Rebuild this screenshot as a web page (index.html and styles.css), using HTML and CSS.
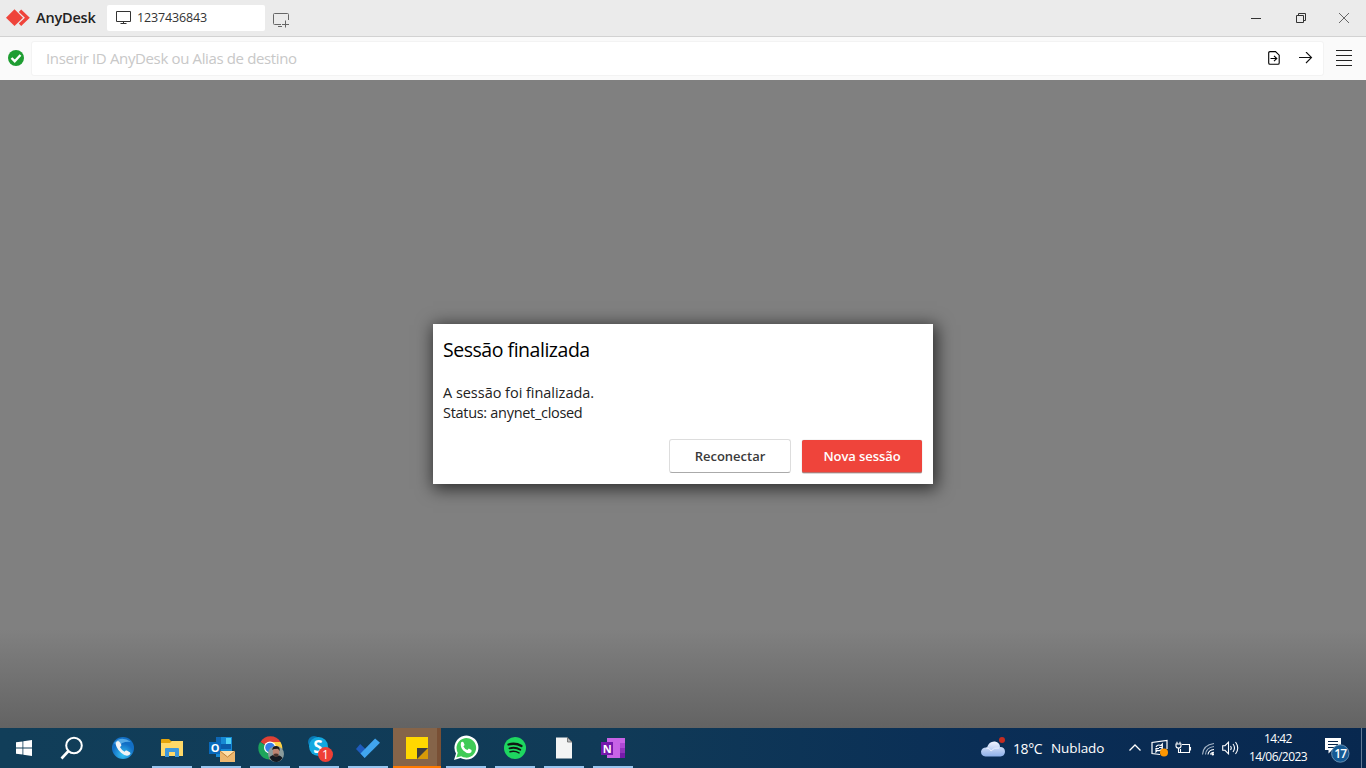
FILE: index.html
```html
<!DOCTYPE html>
<html lang="pt-BR">
<head>
<meta charset="utf-8">
<title>AnyDesk</title>
<link rel="stylesheet" href="styles.css">
</head>
<body>
<header class="titlebar">
  <svg class="logo" width="24" height="18" viewBox="0 0 24 18"><path d="M0 8.700 8.500.3 17 8.700 8.500 17z" fill="#ef443b"/><path d="M12.800 2.900 15.200.5 23.800 8.700 15.200 17l-2.400-2.400L18.900 8.700z" fill="#ef443b"/></svg>
  <span class="brand">AnyDesk</span>
  <div class="tab">
    <svg width="16" height="14" viewBox="0 0 16 14" fill="none" stroke="#333" stroke-width="1"><path d="M.5.5h14v10H.5zM7.500 10.500v2M4.500 12.500h6"/></svg>
    <span class="tab-id">1237436843</span>
  </div>
  <svg class="newtab" width="18" height="16" viewBox="0 0 18 16" fill="none" stroke="#666" stroke-width="1"><path d="M8 11.500H1.500Q.5 11.500.5 10.500V1.500Q.5.5 1.500.5h13q1 0 1 1V7M5 13.500h4M12.500 7.500v7M9 11.500h7"/></svg>
  <div class="controls">
    <svg width="12" height="12"><path d="M1 6.500h10" stroke="#333"/></svg>
    <svg width="12" height="12" fill="none" stroke="#333"><path d="M1.500 3.500h7v7h-7zM3.500 3.500v-2h7v7h-2"/></svg>
    <svg width="12" height="12" fill="none" stroke="#666"><path d="m1 1 10 10M11 1 1 11"/></svg>
  </div>
</header>
<div class="toolbar">
  <svg class="ok" width="16" height="16" viewBox="0 0 16 16"><circle cx="8" cy="8" r="8" fill="#1e9d32"/><path d="m3.500 8 3.200 3.200L12.500 5" fill="none" stroke="#fff" stroke-width="2.400"/></svg>
  <div class="address">
    <span class="placeholder">Inserir ID AnyDesk ou Alias de destino</span>
    <svg class="file" width="12" height="14" fill="none" stroke="#000" stroke-width="1.100"><path d="M2 .6h5.500l3.700 3.600V12q0 1.300-1.200 1.300H2Q.7 13.300.7 12V2Q.7.6 2 .6zM2.500 7.500h6M6 4.800l2.800 2.700L6 10.200"/></svg>
    <svg class="go" width="14" height="12" fill="none" stroke="#111" stroke-width="1.100"><path d="M0 5.500h12.500M7 0l5.500 5.500L7 11"/></svg>
  </div>
  <svg class="menu" width="16" height="16" stroke="#222"><path d="M0 .5h16M0 5.500h16M0 10.500h16M0 15.500h16"/></svg>
</div>
<main class="stage">
  <section class="dialog">
    <h1>Sessão finalizada</h1>
    <p><span class="line-a">A sessão foi finalizada.</span><br><span class="line-b">Status: anynet_closed</span></p>
    <div class="actions"><button class="btn plain">Reconectar</button><button class="btn primary">Nova sessão</button></div>
  </section>
</main>
<footer class="taskbar">
  <div class="cell"><svg width="16" height="16" fill="#fff"><path d="M0 2.300 6.500 1.400v6.200H0zM7.300 1.200 16 0v7.600H7.300zM0 8.400h6.500v6.200L0 13.700zM7.300 8.400H16V16l-8.700-1.200z"/></svg></div>
  <div class="cell"><svg width="24" height="24" fill="none" stroke="#fff"><circle cx="14" cy="9.500" r="7.800" stroke-width="2"/><path d="m8.500 15-7 7.500" stroke-width="2.600"/></svg></div>
  <div class="apps">
    <div class="cell"><svg width="24" height="24"><defs><radialGradient id="ph" cy=".8"><stop stop-color="#38c4f4"/><stop offset="1" stop-color="#126fc5"/></radialGradient></defs><circle cx="12" cy="12" r="11" fill="url(#ph)"/><path d="M3 7Q10-1 20 6q-9-1-13 5z" fill="#8bd8ff" opacity=".55"/><path d="M5 6.500q2-3 4 0l1.400 2.600q0 1.300-1.500 2 1.600 3 4.600 4.600 1-1.600 2.300-1.200l3 1.800q1.500 1.200-.6 2.800-3.200 2-8.200-2.300Q4 11.200 5 6.500z" fill="#f3f3f5"/></svg></div>
    <div class="cell open"><svg width="22" height="20"><path d="M0 1.500Q0 1 1 1h7l2 2h12v15H0z" fill="#e5a50b"/><path d="M0 5h9l2-2h11v15H0z" fill="#ffd968"/><path d="M4 19V11q0-1 1-1h12q1 0 1 1v8h-4v-5H8v5z" fill="#3d98dc"/></svg></div>
    <div class="cell open"><svg class="nudge" width="28" height="28"><path d="M8 3h16v20H8z" fill="#1689d4"/><path d="M8 3h5v6H8z" fill="#0e67b5"/><path d="M18 4h5v6h-5z" fill="#50d2f5"/><path d="M13 10h10v5H13z" fill="#0a5cab"/><path d="M1 8h12v12H1z" fill="#0869bc"/><text x="2.700" y="18" class="app-letter">O</text><path d="M12 17h15v11H12z" fill="#edb76f"/><path d="m12 17 7.500 6 7.500-6z" fill="#ffe0ab"/><path d="m12 17 7.500 6 7.500-6" fill="none" stroke="#c28338"/></svg></div>
    <div class="cell open"><svg class="nudge" width="28" height="28"><path d="M13 14 3.500 8A11.500 11.500 0 0 1 23.500 8z" fill="#df4034"/><path d="M13 14 3 8a11.500 11.500 0 0 0 9 17.500z" fill="#1da45b"/><path d="M13 8h10.500a11.500 11.500 0 0 1-11 17.500z" fill="#fdd045"/><circle cx="13" cy="13.500" r="6" fill="#fff"/><circle cx="13" cy="13.500" r="4.800" fill="#377ee7"/><circle cx="19" cy="20" r="8" fill="#8a9b9c"/><path d="M12.500 23q4-3 7-2 4 0 6 3-3 4-6 4-5 0-7-5z" fill="#151a22"/><ellipse cx="19" cy="18" rx="3.300" ry="4.500" fill="#bd8472"/><path d="M15.300 16q0-4 4-4 4 .5 3.300 5l-1.600-2.300-4 .3z" fill="#1b1817"/><path d="M16.500 20q2.500-1 5 0-.5 3-2.500 3-2-.5-2.500-3" fill="#48322d"/></svg></div>
    <div class="cell open"><svg class="nudge" width="28" height="28"><circle cx="8" cy="8" r="6" fill="#0a79b5"/><circle cx="17" cy="17" r="6.500" fill="#0c83bd"/><circle cx="12.500" cy="12.500" r="9.500" fill="#13a8e0"/><text x="7.200" y="19" class="skype-letter">S</text><circle cx="19.500" cy="20.500" r="7.500" fill="#ef3f35"/><text x="16" y="25" class="count">1</text></svg></div>
    <div class="cell open"><svg width="26" height="22"><path d="m1 12 4.200-5L13 14.500 9.700 21z" fill="#1e5bbd"/><path d="m5.500 16.500 14.600-15L25 5.800 9.700 21z" fill="#41a5ee"/></svg></div>
    <div class="cell open active"><svg width="22" height="22"><path d="M0 0h22v11L11 22H0z" fill="#ffd800"/><path d="M11 22 22 11v11z" fill="#d69a08"/><path d="M11 11h11L11 22z" fill="#3e3e3e"/></svg></div>
    <div class="cell open"><svg width="26" height="26"><path d="M1 25 3 18.500A12 12 0 1 1 7.500 23z" fill="#fff"/><path d="m3.300 22.500 1.500-4.800a9.800 9.800 0 1 1 3.400 3.500z" fill="#3fcb56"/><path d="M8 7.500q1.700-1.700 2.700.2l.9 2.200-1.200 1.500q1.300 2.500 4 3.600l1.400-1.400 2.700 1.400q.6 2.700-2.200 3.300-2.700.3-6-2.800Q7 12.200 8 7.500z" fill="#fff"/></svg></div>
    <div class="cell open"><svg width="24" height="24" fill="none" stroke="#101713" stroke-linecap="round"><circle cx="12" cy="12" r="11" fill="#1ed760" stroke="none"/><path d="M5.500 8.500q7-2 13 1.500" stroke-width="2.300"/><path d="M6.500 12.300q6-1.600 10.800 1.400" stroke-width="1.900"/><path d="M7 15.700q5-1.200 9 1.200" stroke-width="1.500"/></svg></div>
    <div class="cell open"><svg width="16" height="22"><path d="M0 .5h11.500L16 5v16.500H0z" fill="#f3f4f4"/><path d="M11.500.5V5H16z" fill="#b5b9bc" stroke="#666" stroke-width=".8"/></svg></div>
    <div class="cell open"><svg width="24" height="22"><path d="M6 1h18v20H6z" fill="#c863e6"/><path d="M19 6h5v5h-5z" fill="#ad48d5"/><path d="M19 11h5v5h-5z" fill="#9033bd"/><path d="M19 16h5v5h-5z" fill="#741bab"/><path d="M0 5h12v13H0z" fill="#7518ad"/><text x="1.800" y="15.500" class="app-letter">N</text></svg></div>
  </div>
  <div class="tray">
    <svg class="weather" width="26" height="24"><defs><linearGradient id="cl" x2="0" y2="1"><stop stop-color="#f3f5ff"/><stop offset="1" stop-color="#8cafe9"/></linearGradient></defs><path d="M5.500 21.500Q1 21 1 16.500 2 12 7 12.500 9 6 15 6.500q5 1 5 5.500 5 0 5 5-.5 4-4.500 4.500z" fill="url(#cl)"/><path d="M6 13q4 0 5 3 3-4 8-3" fill="none" stroke="#e9efff"/><circle cx="22" cy="5" r="3" fill="#c42c21"/></svg>
    <span class="temp">18°C</span><span class="sky">Nublado</span>
    <svg class="chev" width="12" height="8" fill="none" stroke="#fff" stroke-width="1.300"><path d="m.5 6.500 5.500-5.500 5.500 5.500"/></svg>
    <svg class="update" width="18" height="18" fill="none" stroke="#fff" stroke-width="1.200"><path d="M9 15.500 1 14.500V3.500L16 1.500V10"/><path d="M5 8q1.500-3 5-1.500L11.300 5v3.500H8M11.500 9q-1 3.500-5.200 2.300L5 12.800V9.500h3"/><circle cx="13" cy="13.500" r="4" fill="#ff9700" stroke="none"/></svg>
    <svg class="battery" width="17" height="14" fill="none" stroke="#fff" stroke-width="1.100"><path d="M7 3.500h7.500v8h-9V8M15.500 6v3.500M1 3h5v2q0 2-2.500 2T1 5zM2 3V.8M5 3V.8M3.500 7v4.500h2"/></svg>
    <svg class="wifi" width="14" height="14" fill="none" stroke="#a4b4c6" stroke-width="1.100"><path d="M1.500 12.500Q2 3 13 1.500M4.500 12.500Q5 5.500 13 4.500"/><path d="M7 12.500q.5-4.500 6-5M9.500 12.500q.5-2 3.500-2.200" stroke="#fff"/><circle cx="11.800" cy="12.200" r="1.200" fill="#fff" stroke="none"/></svg>
    <svg class="sound" width="18" height="14" fill="none" stroke="#fff" stroke-width="1.100"><path d="M.7 4.700H3l3.500-3.500v11.600L3 9.300H.7zM8.500 5q1.500 2 0 4M11 3q3 4 0 8M13.500 1q4.500 6 0 12"/></svg>
    <div class="clock"><span class="time">14:42</span><span class="date">14/06/2023</span></div>
    <svg class="notice" width="28" height="28"><path d="M1 3h16v12H8l-3.500 3.500V15H1z" fill="#fff"/><path d="M4 6.500h10M4 9.500h10M4 12.500h6" stroke="#08264b"/><circle cx="16.300" cy="18.500" r="8.700" fill="#155a94" stroke="#668daf"/><text x="10.200" y="22.500" class="seventeen">17</text></svg>
  </div>
</footer>
</body>
</html>
```

FILE: styles.css
```css
* { box-sizing: border-box; }
body {
  margin: 0;
  width: 1366px;
  height: 768px;
  overflow: hidden;
  display: flex;
  flex-direction: column;
  font-family: "Open Sans", "Noto Sans", sans-serif;
}
svg { display: block; flex: none; }
span { white-space: nowrap; }
.titlebar {
  height: 37px;
  flex: none;
  display: flex;
  align-items: flex-start;
  background: #ebebeb;
  border-bottom: 1px solid #d2d2d2;
}
.logo { margin: 9px 0 0 6px; }
.brand {
  width: 77px;
  flex: none;
  padding: 8px 0 0 6px;
  font-size: 14.500px;
  line-height: 20px;
  font-weight: 600;
  color: #222;
  letter-spacing: -.2px;
}
.tab {
  width: 158px;
  height: 26px;
  margin-top: 5px;
  padding-left: 9px;
  border-radius: 2px;
  background: #fff;
  display: flex;
  align-items: center;
  gap: 5px;
}
.tab-id { font-size: 12.500px; letter-spacing: -.14px; color: #333; padding-bottom: 1px; }
.newtab { margin: 13px 0 0 8px; }
.controls { display: flex; gap: 32px; margin: 12px 16px 0 auto; }
.controls svg:nth-child(2) { margin: 0 -1px 0 1px; }
.toolbar {
  height: 43px;
  flex: none;
  display: flex;
  align-items: center;
  background: #fafafa;
}
.ok { margin: 0 0 1px 8px; }
.address {
  width: 1293px;
  height: 35px;
  margin: 0 0 1px 7px;
  padding: 0 11px 0 14px;
  border: 1px solid #f3f3f3;
  border-radius: 3px;
  background: #fff;
  display: flex;
  align-items: center;
}
.placeholder { font-size: 15px; letter-spacing: -.36px; color: #c8c8c8; }
.file { margin-left: auto; }
.go { margin: 0 -1px 0 19px; }
.menu { margin: 0 0 1px 12px; }
.stage {
  height: 648px;
  flex: none;
  background: linear-gradient(#808080 550px, #636363);
  padding-top: 244px;
}
.dialog {
  width: 500px;
  height: 160px;
  margin: 0 auto;
  padding: 12px 10px 11px;
  background: #fff;
  box-shadow: 2px 3px 16px 2px rgba(0, 0, 0, .65);
  display: flex;
  flex-direction: column;
}
h1 { margin: 0; font-size: 19.500px; line-height: 28px; font-weight: 400; letter-spacing: -.47px; color: #000; }
p { margin: 19px 0 0; font-size: 14.500px; line-height: 20px; color: #222; }
.line-a { letter-spacing: -.03px; }
.line-b { letter-spacing: -.3px; }
.actions { display: flex; justify-content: flex-end; gap: 11px; margin-top: auto; padding-right: 1px; }
.btn {
  width: 122px;
  height: 34px;
  padding: 0;
  border: 1px solid #ddd;
  border-bottom: 1px solid #aaa;
  border-radius: 3px;
  background: #fff;
  color: #3a3a3a;
  font: 600 13px/30px "Open Sans", sans-serif;
}
.primary { width: 120px; height: 33px; margin-top: 1px; border: 0; box-shadow: 0 0 1px rgba(0, 0, 0, .4), 0 1px 0 rgba(0, 0, 0, .12); border-radius: 2px; background: #ef443b; color: #fff; border-bottom: 1px solid #b47672; letter-spacing: -.08px; }
.taskbar {
  height: 40px;
  flex: none;
  display: flex;
  background: linear-gradient(90deg, #113e59, #103a57 45%, #0a2e56 72%, #08284f);
}
.cell { width: 48px; height: 40px; display: flex; align-items: center; justify-content: center; }
.apps { display: flex; gap: 1px; margin-left: 3px; }
.open {
  background: linear-gradient(#97c5ef, #97c5ef) center bottom / 40px 2px no-repeat;
}
.nudge { margin-left: 2px; }
.active { background: linear-gradient(#ff7a00, #ff7a00) center bottom / 48px 2px no-repeat, linear-gradient(90deg, #856449 44px, #795035 44px); }
.app-letter { fill: #fff; font: 700 11px "Open Sans", sans-serif; }
.skype-letter { fill: #fff; font: 700 17px "Open Sans", sans-serif; }
.count { fill: #fff; font: 12px "Open Sans", sans-serif; }
.tray {
  width: 386px;
  margin-left: auto;
  display: flex;
  align-items: center;
  color: #fff;
  background: linear-gradient(#617995, #617995) 381px 0 / 1px 40px no-repeat;
}
.weather { margin-top: -2px; }
.temp { width: 38px; margin-left: 7px; font-size: 14px; letter-spacing: -.4px; }
.sky { width: 78px; font-size: 13.500px; letter-spacing: -.1px; }
.chev { margin-left: 0; }
.update { margin-left: 10px; }
.battery { margin-left: 6px; }
.wifi { margin-left: 9px; margin-top: 2px; }
.sound { margin-left: 7px; }
.clock {
  width: 70px;
  margin-left: 3px;
  display: flex;
  flex-direction: column;
  align-items: center;
  font-size: 12px;
  line-height: 18px;
  letter-spacing: -.55px;
}
.notice { margin: 2px 0 0 11px; }
.seventeen { fill: #fff; font: 600 12px "Open Sans", sans-serif; letter-spacing: -.8px; }
```
